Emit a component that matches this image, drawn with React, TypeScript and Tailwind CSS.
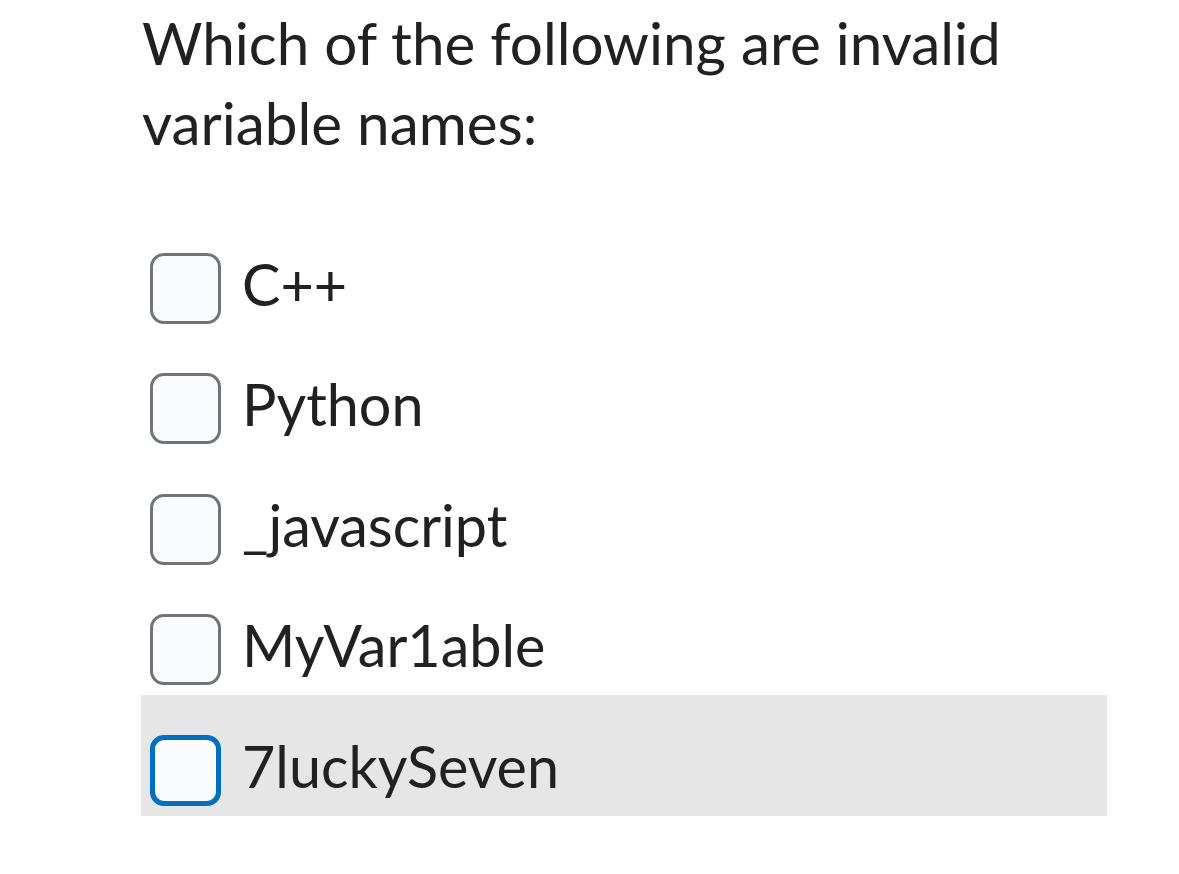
import React from "react";

const options = ["C++", "Python", "_javascript", "MyVar1able", "7luckySeven"];

export default function App() {
  const focused = 4;

  return (
    <div
      className="min-h-[874px] bg-white text-[#202122]"
      style={{ fontFamily: "Lato, 'Noto Sans', sans-serif" }}
    >
      <div className="ml-[141px] w-[966px] pt-[2px]">
        {/* Câu hỏi */}
        <h1 className="pl-[1px] text-[58.4px] leading-[80px] font-normal">
          Which of the following are invalid variable names:
        </h1>

        {/* Danh sách đáp án */}
        <div className="mt-[51px]">
          {options.map((label, i) => (
            <label
              key={label}
              className={`flex h-[120.5px] cursor-pointer items-end pb-[10px] pl-[9px] ${
                i === focused ? "bg-[#e6e6e6]" : ""
              }`}
            >
              <span
                className={`box-border h-[71px] w-[71px] shrink-0 rounded-[14px] bg-[#f9fbff] ${
                  i === focused
                    ? "border-[5px] border-[#006fbf]"
                    : "border-[3px] border-[#6e7477]"
                }`}
              />
              <span className="ml-[21px] self-center pt-[30px] text-[57.5px] leading-none">
                {label}
              </span>
            </label>
          ))}
        </div>
      </div>
    </div>
  );
}
